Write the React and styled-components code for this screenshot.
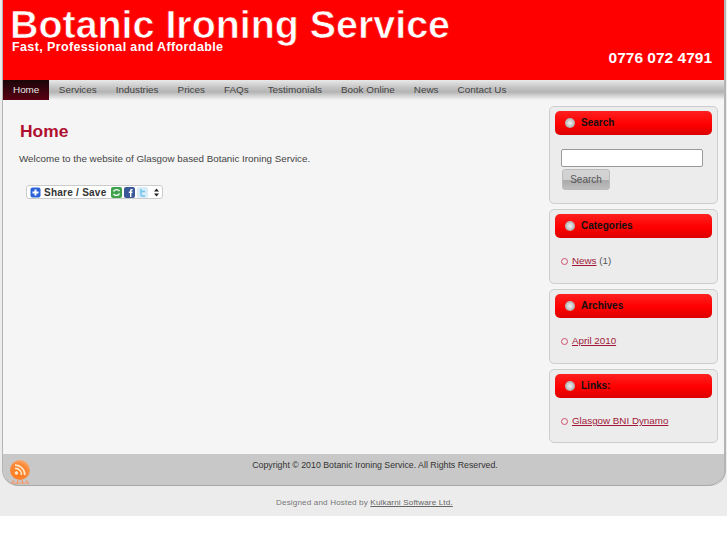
import React from 'react';
import styled, { createGlobalStyle } from 'styled-components';

const GlobalStyles = createGlobalStyle`
  html, body {
    margin: 0;
    padding: 0;
    background: #fff;
    color: #444;
    font-family: "Liberation Sans", Arial, sans-serif;
    overflow: hidden;
  }
`;

const Page = styled.div`
  width: 727px;
  height: 516px;
  background: #ececec;
`;

const Shell = styled.div`
  width: 724px;
  margin-left: 2px;
  border-left: 1px solid #b4b4b4;
  border-right: 2px solid #b4b4b4;
  border-radius: 0 0 16px 16px;
  box-sizing: border-box;
`;

const Header = styled.header`
  height: 80px;
  background: #ff0000;
  color: #fff;
  display: flex;
  justify-content: space-between;
`;

const Brand = styled.div`
  padding: 3px 0 0 7px;
`;

const Title = styled.div`
  font-size: 39.4px;
  line-height: 43px;
  font-weight: bold;
  -webkit-text-stroke: 0.7px #ff0000;
  white-space: nowrap;
`;

const Tagline = styled.div`
  font-size: 12.5px;
  line-height: 14px;
  font-weight: bold;
  margin: -6px 0 0 2px;
  letter-spacing: 0.38px;
`;

const Phone = styled.div`
  font-size: 15.5px;
  font-weight: bold;
  align-self: flex-end;
  padding: 0 12px 13px 0;
  line-height: 18px;
  white-space: nowrap;
`;

const Nav = styled.nav`
  height: 20px;
  display: flex;
  background: linear-gradient(#e9e9e9 0, #c2c2c2 40%, #b4b4b4 60%, #dcdcdc 85%, #f5f5f5 100%);
`;

const NavItem = styled.a`
  height: 20px;
  line-height: 19px;
  font-size: 9.88px;
  padding: ${p => (p.$active ? '0 10px' : '0 9.5px')};
  color: ${p => (p.$active ? '#e8e8e8' : '#444')};
  background: ${p => (p.$active ? 'linear-gradient(#1a0508, #5a0012)' : 'none')};
  white-space: nowrap;
`;

const Main = styled.div`
  height: 354px;
  background: #f5f5f5;
  display: flex;
  justify-content: space-between;
`;

const Content = styled.main`
  padding: 20px 0 0 16px;
`;

const Heading = styled.h1`
  margin: 0;
  color: #b01030;
  font-size: 17.4px;
  line-height: 22px;
  font-weight: bold;
  padding-left: 1px;
`;

const Intro = styled.p`
  margin: 10px 0 0;
  font-size: 9.8px;
  line-height: 14px;
  color: #444;
`;

const ShareButton = styled.div`
  margin: 19px 0 0 7px;
  width: 137px;
  height: 14px;
  box-sizing: border-box;
  border: 1px solid #ccc;
  border-radius: 3px;
  background: #fff;
  display: flex;
  align-items: center;
  padding-left: 3px;
  gap: 2px;
`;

const ShareLabel = styled.span`
  font-size: 10px;
  font-weight: bold;
  letter-spacing: 0.25px;
  color: #333;
  margin: 0 3px 0 1px;
  white-space: nowrap;
`;

const Sidebar = styled.aside`
  width: 169px;
  margin: 6px 6px 0 0;
  display: flex;
  flex-direction: column;
  gap: 5px;
`;

const Panel = styled.section`
  height: ${p => p.$height}px;
  box-sizing: border-box;
  border: 1px solid #cdcdcd;
  border-radius: 5px;
  background: #ececec;
  padding: 4px 5px 0;
`;

const PanelHead = styled.div`
  height: 24px;
  box-sizing: border-box;
  padding: 0 0 2px 10px;
  border-radius: 5px;
  background: linear-gradient(#ff2020 0, #ff0000 55%, #dc0000 100%);
  display: flex;
  align-items: center;
  gap: 6px;
  font-size: 10px;
  font-weight: bold;
  color: #111;
`;

const Bullet = styled.span`
  width: 10px;
  height: 10px;
  margin-top: 2px;
  border-radius: 50%;
  background: radial-gradient(circle at 50% 50%, #f4f4f4, #a8a8a8 75%);
  flex: none;
`;

const SearchBody = styled.form`
  padding: 14px 0 0 6px;
  display: flex;
  flex-direction: column;
  align-items: flex-start;
`;

const SearchInput = styled.input`
  width: 142px;
  height: 18px;
  box-sizing: border-box;
  border: 1px solid #999;
  border-radius: 2px;
  background: #fff;
  padding: 0;
  margin: 0 0 2px;
`;

const SearchButton = styled.button`
  width: 48px;
  height: 21px;
  margin-left: 1px;
  border: 1px solid #bbb;
  border-radius: 3px;
  background: linear-gradient(#d4d4d4 0, #d0d0d0 50%, #a9a9a9 52%, #bdbdbd 100%);
  color: #555;
  font-family: inherit;
  font-size: 10px;
  padding: 0;
`;

const LinkList = styled.ul`
  list-style: none;
  margin: 0;
  padding: 16px 0 0 6px;
`;

const LinkItem = styled.li`
  display: flex;
  align-items: center;
  gap: 4px;
  font-size: 9.8px;
  line-height: 14px;
  color: #555;
  white-space: pre;
`;

const Ring = styled.span`
  width: 5px;
  height: 5px;
  border: 1px solid #d0506c;
  border-radius: 50%;
  flex: none;
`;

const PanelLink = styled.a`
  color: #a01838;
  text-decoration: underline;
`;

const Footer = styled.footer`
  height: 32px;
  background: #c8c8c8;
  border-bottom: 1px solid #a8a8a8;
  border-radius: 0 0 16px 16px;
  box-sizing: border-box;
  position: relative;
  display: flex;
  justify-content: center;
  font-size: 8.8px;
  line-height: 23px;
  color: #333;
  padding-left: 23px;
`;

const RssBadge = styled.svg`
  position: absolute;
  left: 6px;
  top: 5px;
`;

const Credit = styled.div`
  padding: 10px 0 0 276px;
  font-size: 8.1px;
  line-height: 14px;
  color: #777;
  letter-spacing: 0.15px;
`;

const CreditLink = styled.a`
  color: #666;
  text-decoration: underline;
`;

const PlusIcon = () => (
  <svg width="11" height="11" viewBox="0 0 11 11">
    <rect x="0.5" y="0.5" width="10" height="10" rx="2" fill="#2a62d8" />
    <path d="M5.5 2.5v6M2.5 5.5h6" stroke="#fff" strokeWidth="2" />
  </svg>
);

const ShareIcons = () => (
  <>
    <svg width="11" height="11" viewBox="0 0 11 11">
      <rect width="11" height="11" rx="2" fill="#3fa34d" />
      <path d="M2.5 4.5c1-2.5 4.5-2.5 6 -.5M8.5 6.5c-1 2.5-4.5 2.5-6 .5" stroke="#fff" fill="none" strokeWidth="1.3" />
    </svg>
    <svg width="11" height="11" viewBox="0 0 11 11">
      <rect width="11" height="11" rx="2" fill="#3b5998" />
      <path d="M6 10V6H4.8V4.6H6V3.6C6 2.5 6.6 2 7.6 2H8.6V3.3H8C7.5 3.3 7.4 3.5 7.4 3.9V4.6H8.6L8.4 6H7.4V10Z" fill="#fff" />
    </svg>
    <svg width="11" height="11" viewBox="0 0 11 11">
      <rect width="11" height="11" rx="2" fill="#d8ecf8" />
      <path d="M4 2v5.5c0 1 .7 1.5 1.6 1.5H8M4 4.6h4" stroke="#6ec4ee" fill="none" strokeWidth="1.5" />
    </svg>
    <svg width="9" height="11" viewBox="0 0 9 11" style={{ marginLeft: 2 }}>
      <path d="M4.5 1.5L7 4.5H2ZM4.5 9.5L7 6.5H2Z" fill="#222" />
    </svg>
  </>
);

const RssIcon = () => (
  <RssBadge width="22" height="27" viewBox="0 0 22 27">
    <defs>
      <radialGradient id="rssBall" cx="40%" cy="70%" r="75%">
        <stop offset="0" stopColor="#ff7a1c" />
        <stop offset="0.7" stopColor="#f98a3a" />
        <stop offset="1" stopColor="#fbb27a" />
      </radialGradient>
    </defs>
    <path d="M5 21l-3 4M9 21l-1 4M13 21l1 4M17 21l3 4M3 24h16" stroke="#f59a6a" strokeWidth="1.2" fill="none" />
    <circle cx="11" cy="11" r="10" fill="url(#rssBall)" />
    <circle cx="7.5" cy="14" r="1.8" fill="#ffe6c4" />
    <path d="M6 9.5a6 6 0 0 1 6.5 6.5M6 6.2a9.5 9.5 0 0 1 9.8 9.8" stroke="#ffe6c4" strokeWidth="1.7" fill="none" />
  </RssBadge>
);

const navLinks = ['Services', 'Industries', 'Prices', 'FAQs', 'Testimonials', 'Book Online', 'News', 'Contact Us'];

function App() {
  return (
    <Page>
      <GlobalStyles />
      <Shell>
        <Header>
          <Brand>
            <Title>Botanic Ironing Service</Title>
            <Tagline>Fast, Professional and Affordable</Tagline>
          </Brand>
          <Phone>0776 072 4791</Phone>
        </Header>
        <Nav>
          <NavItem $active>Home</NavItem>
          {navLinks.map(link => (
            <NavItem key={link}>{link}</NavItem>
          ))}
        </Nav>
        <Main>
          <Content>
            <Heading>Home</Heading>
            <Intro>Welcome to the website of Glasgow based Botanic Ironing Service.</Intro>
            <ShareButton>
              <PlusIcon />
              <ShareLabel>Share / Save</ShareLabel>
              <ShareIcons />
            </ShareButton>
          </Content>
          <Sidebar>
            <Panel $height={98}>
              <PanelHead>
                <Bullet />
                Search
              </PanelHead>
              <SearchBody>
                <SearchInput />
                <SearchButton type="button">Search</SearchButton>
              </SearchBody>
            </Panel>
            <Panel $height={75}>
              <PanelHead>
                <Bullet />
                Categories
              </PanelHead>
              <LinkList>
                <LinkItem>
                  <Ring />
                  <span>
                    <PanelLink>News</PanelLink> (1)
                  </span>
                </LinkItem>
              </LinkList>
            </Panel>
            <Panel $height={75}>
              <PanelHead>
                <Bullet />
                Archives
              </PanelHead>
              <LinkList>
                <LinkItem>
                  <Ring />
                  <PanelLink>April 2010</PanelLink>
                </LinkItem>
              </LinkList>
            </Panel>
            <Panel $height={74}>
              <PanelHead>
                <Bullet />
                Links:
              </PanelHead>
              <LinkList>
                <LinkItem>
                  <Ring />
                  <PanelLink>Glasgow BNI Dynamo</PanelLink>
                </LinkItem>
              </LinkList>
            </Panel>
          </Sidebar>
        </Main>
        <Footer>
          <RssIcon />
          Copyright © 2010 Botanic Ironing Service. All Rights Reserved.
        </Footer>
      </Shell>
      <Credit>
        Designed and Hosted by <CreditLink>Kulkarni Software Ltd.</CreditLink>
      </Credit>
    </Page>
  );
}

export default App;
